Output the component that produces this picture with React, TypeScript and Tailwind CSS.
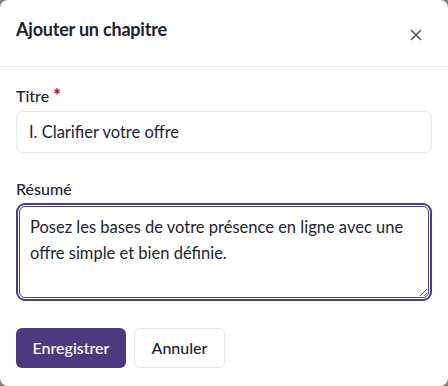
import React from 'react';
import { X } from 'lucide-react';

const App: React.FC = () => {
  return (
    <div className="w-[448px] h-[386px] bg-[#808080]" style={{ fontFamily: 'Lato, "Noto Sans", sans-serif' }}>
      <div className="w-full h-full bg-white rounded-lg flex flex-col text-[#1e2230]">
        <div className="flex items-start justify-between px-4 pt-[15px] h-[67px] border-b border-[#e5e7eb]">
          <h2 className="text-lg font-bold tracking-[-0.2px]">Ajouter un chapitre</h2>
          <button className="mt-[11px] mr-[7px] text-[#4b5563]">
            <X className="w-[18px] h-[18px]" strokeWidth={2} />
          </button>
        </div>
        <div className="px-4 pt-[17px] flex flex-col">
          <label className="text-base font-medium leading-6">
            Titre <span className="text-[#9b1c3c] font-black text-lg leading-none">*</span>
          </label>
          <div className="mt-[3px] h-[42px] border border-[#e5e7eb] rounded-lg px-3 flex items-center text-[16.5px]">
            I. Clarifier votre offre
          </div>
          <label className="mt-[24px] text-base font-medium leading-6">Résumé</label>
          <div className="mt-[2px] rounded-[9px] border-2 border-[#4b3a7e] p-[1px]">
            <textarea
              className="block w-full h-[92px] resize-y border border-[#4b3a7e] rounded-md px-[10px] py-[7px] text-[16.5px] leading-[26px] outline-none text-[#1e2230]"
              defaultValue="Posez les bases de votre présence en ligne avec une offre simple et bien définie."
            />
          </div>
          <div className="mt-[27px] flex gap-2">
            <button className="h-10 w-[110px] rounded-md bg-[#4b3a7e] text-white text-base font-medium">Enregistrer</button>
            <button className="h-10 w-[91px] rounded-md border border-[#e5e7eb] bg-white text-base font-medium">Annuler</button>
          </div>
        </div>
      </div>
    </div>
  );
};

export default App;
